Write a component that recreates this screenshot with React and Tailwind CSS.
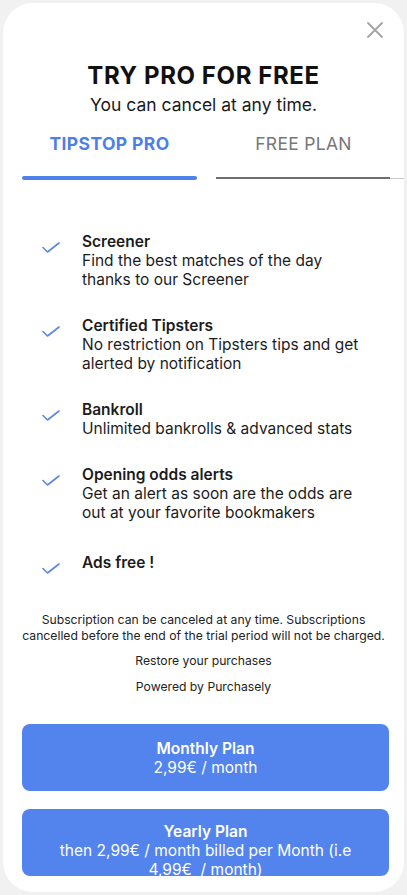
import React from 'react';

const FEATURES = [
    { title: 'Screener', text: ['Find the best matches of the day', 'thanks to our Screener'] },
    { title: 'Certified Tipsters', text: ['No restriction on Tipsters tips and get', 'alerted by notification'] },
    { title: 'Bankroll', text: ['Unlimited bankrolls & advanced stats'] },
    { title: 'Opening odds alerts', text: ['Get an alert as soon are the odds are', 'out at your favorite bookmakers'] },
    { title: 'Ads free !', text: [], extra: true },
];

function Check() {
    return (
        <svg width="18" height="11" viewBox="0 0 18 11" fill="none" className="shrink-0 mt-[10px]">
            <path d="M1 5.5L5.5 10L17 1" stroke="#5b86e5" strokeWidth="1.6" strokeLinecap="round" strokeLinejoin="round" />
        </svg>
    );
}

export default function App() {
    return (
        <div className="w-[407px] h-[895px] bg-[#f1f1f1] p-[3px] overflow-hidden" style={{ fontFamily: 'Inter, "Noto Sans", sans-serif' }}>
            <div className="relative h-full bg-white rounded-[30px] overflow-hidden flex flex-col">
                {/* Close */}
                <button className="absolute top-[19px] right-[21px] p-0">
                    <svg width="16" height="16" viewBox="0 0 16 16" fill="none">
                        <path d="M1 1L15 15M15 1L1 15" stroke="#a3a3a3" strokeWidth="1.8" strokeLinecap="round" />
                    </svg>
                </button>

                <div className="pt-[57px] text-center">
                    <h1 className="text-[24px] leading-[32px] font-bold text-[#111] tracking-[0.6px]">TRY PRO FOR FREE</h1>
                    <p className="text-[17.5px] leading-[26px] text-[#1a1a1a]">You can cancel at any time.</p>
                </div>

                {/* Tabs */}
                <div className="flex mt-[13px] pl-[19px]">
                    <div className="w-[175px] flex flex-col items-center">
                        <span className="text-[17.5px] leading-[26px] font-bold text-[#4d7fe6] tracking-[0.4px]">TIPSTOP PRO</span>
                        <div className="mt-[19px] h-[4px] w-full rounded-full bg-[#4f81ea]" />
                    </div>
                    <div className="flex-1 flex flex-col ml-[19px]">
                        <span className="w-[175px] text-center text-[17.5px] leading-[26px] text-[#777] tracking-[0.3px]">FREE PLAN</span>
                        <div className="mt-[20px] flex items-center">
                            <div className="h-[2px] w-[174px] bg-[#6e6e6e]" />
                            <div className="h-px flex-1 bg-[#c8c8c8]" />
                        </div>
                    </div>
                </div>

                {/* Features */}
                <div className="mt-[52px] pl-[39px] pr-[16px] flex flex-col gap-[27px]">
                    {FEATURES.map((f) => (
                        <div key={f.title} className={`flex gap-[22px] ${f.extra ? 'mt-[4px]' : ''}`}>
                            <Check />
                            <div className="text-[15.5px] leading-[19px] text-[#1c1c1c]">
                                <div className="font-semibold">{f.title}</div>
                                {f.text.map((t) => (
                                    <div key={t}>{t}</div>
                                ))}
                            </div>
                        </div>
                    ))}
                </div>

                {/* Footer */}
                <div className="mt-[38px] text-center text-[12.2px] leading-[16px] text-[#222]">
                    <p>Subscription can be canceled at any time. Subscriptions<br />cancelled before the end of the trial period will not be charged.</p>
                    <p className="mt-[9px]">Restore your purchases</p>
                    <p className="mt-[10px]">Powered by Purchasely</p>
                </div>

                {/* Plans */}
                <div className="mt-[29px] pl-[19px] pr-[15px] flex flex-col gap-[18px]">
                    <button className="h-[67px] rounded-[8px] bg-[#5384ee] text-white text-[15.5px] leading-[19px] flex flex-col items-center justify-center">
                        <span className="font-semibold">Monthly Plan</span>
                        <span>2,99€ / month</span>
                    </button>
                    <button className="h-[67px] rounded-[8px] bg-[#5384ee] text-white text-[15.5px] leading-[19px] overflow-hidden flex flex-col items-center pt-[13px]">
                        <span className="font-semibold">Yearly Plan</span>
                        <span>then 2,99€ / month billed per Month (i.e</span>
                        <span>4,99€&nbsp; / month)</span>
                    </button>
                </div>
            </div>
        </div>
    );
}
